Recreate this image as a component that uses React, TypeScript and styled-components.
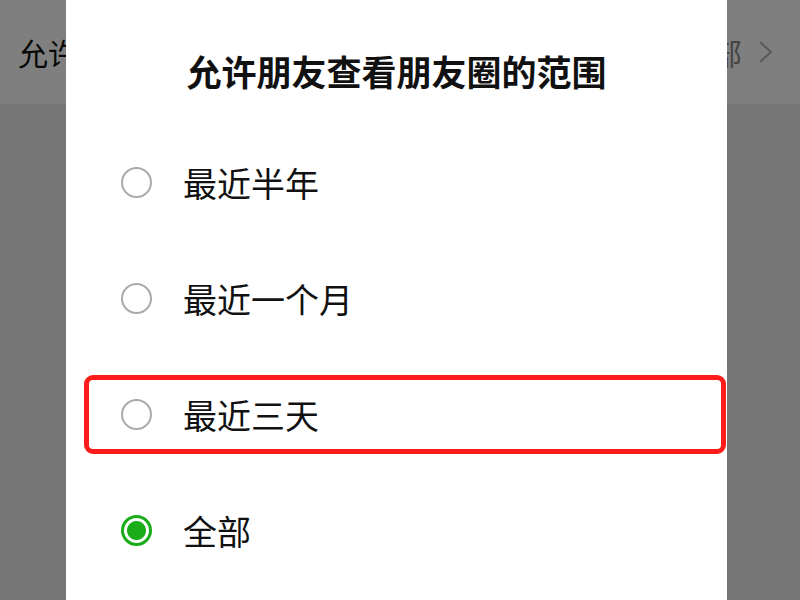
import styled, { createGlobalStyle } from 'styled-components';

const GlobalStyle = createGlobalStyle`
    html, body {
        margin: 0;
        padding: 0;
        width: 800px;
        height: 600px;
        overflow: hidden;
        background: #ededed;
        font-family: "Noto Sans CJK SC", "Noto Sans", sans-serif;
    }
`;

const OPTIONS = [
    { label: '最近半年' },
    { label: '最近一个月' },
    { label: '最近三天', highlighted: true },
    { label: '全部', checked: true },
];

export default function App() {
    return (
        <>
            <GlobalStyle />
            <Page>
                <SettingRow>
                    <SettingLabel>允许朋友</SettingLabel>
                    <SettingValue>
                        全部
                        <Chevron width = '16' height = '24' viewBox = '0 0 16 24'>
                            <path d = 'M2 2 L13 12 L2 22' fill = 'none' stroke = '#b2b2b2' strokeWidth = '2' />
                        </Chevron>
                    </SettingValue>
                </SettingRow>
            </Page>

            <Mask>
                <Dialog>
                    <Title>允许朋友查看朋友圈的范围</Title>
                    <OptionList>
                        {OPTIONS.map(option => (
                            <Option key = { option.label } $highlighted = { option.highlighted }>
                                <Radio $checked = { option.checked } />
                                <OptionLabel>{option.label}</OptionLabel>
                            </Option>
                        ))}
                    </OptionList>
                </Dialog>
            </Mask>
        </>
    );
}

/* Styles */
const Page = styled.div`
    width: 800px;
    height: 600px;
    background: #ededed;
`;

const SettingRow = styled.div`
    display: flex;
    align-items: center;
    justify-content: space-between;
    height: 104px;
    padding: 0 26px 0 18px;
    box-sizing: border-box;
    background: #ffffff;
`;

const SettingLabel = styled.div`
    font-size: 30px;
    color: #111111;
`;

const SettingValue = styled.div`
    display: flex;
    align-items: center;
    gap: 16px;
    font-size: 30px;
    color: #888888;
`;

const Chevron = styled.svg`
    display: block;
`;

const Mask = styled.div`
    position: absolute;
    inset: 0;
    width: 800px;
    height: 600px;
    background: rgba(0, 0, 0, 0.5);
`;

const Dialog = styled.div`
    position: absolute;
    left: 66px;
    top: 0;
    width: 661px;
    height: 600px;
    display: flex;
    flex-direction: column;
    background: #ffffff;
`;

const Title = styled.div`
    height: 140px;
    display: flex;
    align-items: center;
    justify-content: center;
    font-size: 35px;
    font-weight: 700;
    color: #111111;
`;

const OptionList = styled.div`
    display: flex;
    flex-direction: column;
    gap: 37px;
    padding-top: 3px;
`;

const Option = styled.div<{ $highlighted?: boolean }>`
    display: flex;
    align-items: center;
    gap: 31px;
    height: 79px;
    margin: 0 1px 0 18px;
    padding-left: 32px;
    box-sizing: border-box;
    border: 5px solid ${p => (p.$highlighted ? '#fc1d1b' : 'transparent')};
    border-radius: 9px;
`;

const Radio = styled.span<{ $checked?: boolean }>`
    width: 31px;
    height: 31px;
    flex: none;
    box-sizing: border-box;
    border-radius: 50%;
    border: ${p => (p.$checked ? '3px solid #1aad19' : '2px solid #aaaaaa')};
    background: ${p => (p.$checked ? 'radial-gradient(circle, #1aad19 0 9px, #ffffff 10px)' : '#ffffff')};
`;

const OptionLabel = styled.span`
    font-size: 34px;
    color: #111111;
`;
